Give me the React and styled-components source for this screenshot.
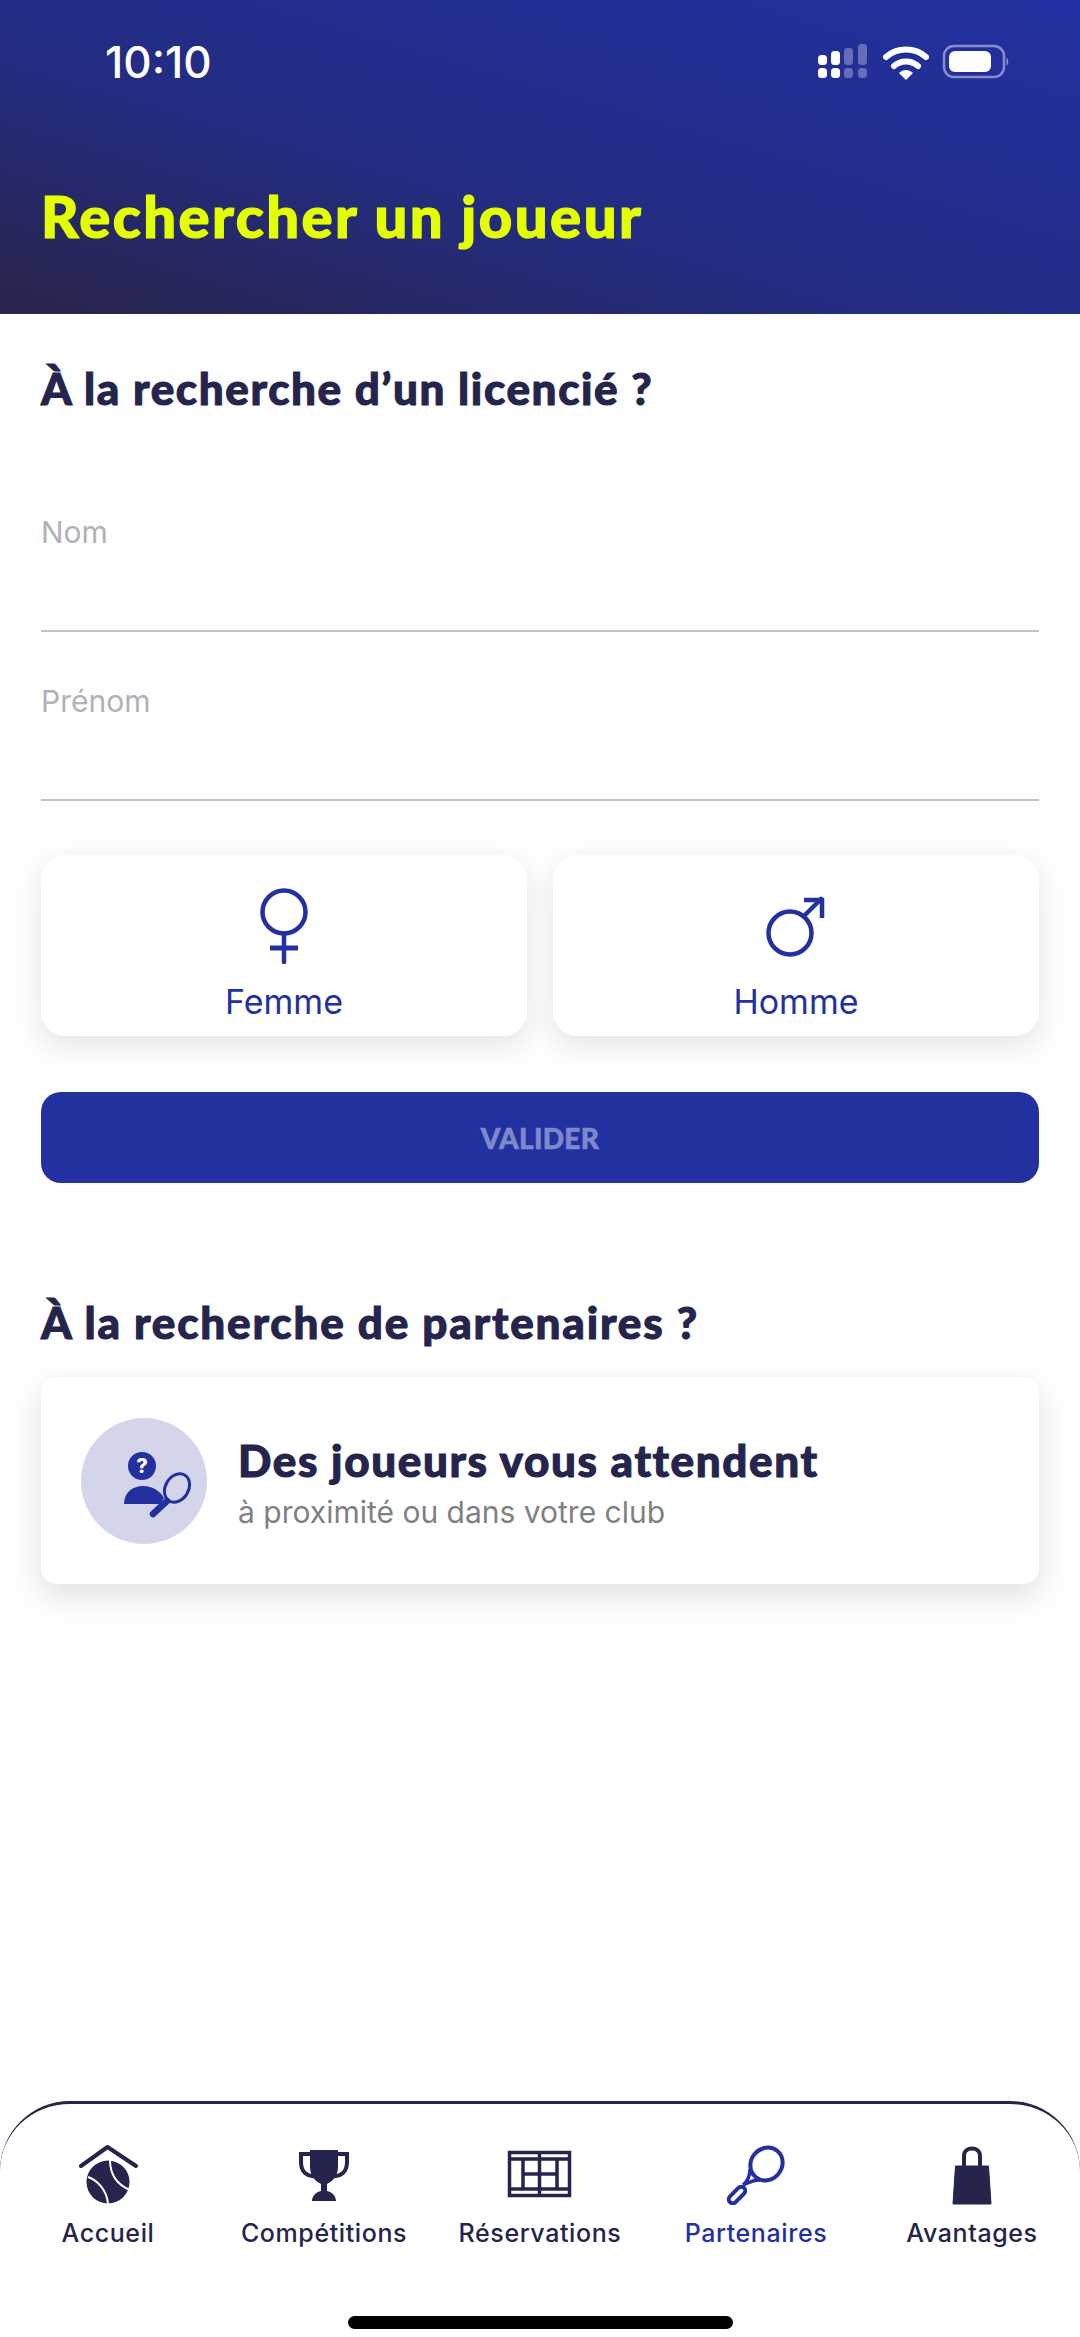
import React from "react";
import styled, { createGlobalStyle } from "styled-components";

const NAVY = "#24244c";
const BLUE = "#2330a0";

const tabs = [
  { label: "Accueil", icon: <HomeIcon /> },
  { label: "Compétitions", icon: <TrophyIcon /> },
  { label: "Réservations", icon: <CourtIcon /> },
  { label: "Partenaires", icon: <RacketIcon />, active: true },
  { label: "Avantages", icon: <BagIcon /> }
];

export default function App() {
  return (
    <Page>
      <GlobalStyle />
      <Header>
        <StatusBar>
          <Clock>10:10</Clock>
          <StatusIcons />
        </StatusBar>
        <PageTitle>Rechercher un joueur</PageTitle>
      </Header>

      <Main>
        <SectionTitle>À la recherche d’un licencié ?</SectionTitle>
        <Form>
          <Field>
            <FieldLabel>Nom</FieldLabel>
          </Field>
          <Field>
            <FieldLabel>Prénom</FieldLabel>
          </Field>
        </Form>

        <GenderRow>
          <GenderCard>
            <GenderIconSlot>
              <FemaleIcon />
            </GenderIconSlot>
            Femme
          </GenderCard>
          <GenderCard>
            <GenderIconSlot>
              <MaleIcon />
            </GenderIconSlot>
            Homme
          </GenderCard>
        </GenderRow>

        <SubmitButton>VALIDER</SubmitButton>

        <PartnersTitle>À la recherche de partenaires ?</PartnersTitle>
        <PartnerCard>
          <PartnerBadge>
            <PartnerIcon />
          </PartnerBadge>
          <PartnerText>
            <PartnerName>Des joueurs vous attendent</PartnerName>
            <PartnerHint>à proximité ou dans votre club</PartnerHint>
          </PartnerText>
        </PartnerCard>
      </Main>

      <TabBar>
        <Tabs>
          {tabs.map(tab => (
            <Tab key={tab.label} active={tab.active}>
              {tab.icon}
              <span>{tab.label}</span>
            </Tab>
          ))}
        </Tabs>
        <HomeIndicator />
      </TabBar>
    </Page>
  );
}

function StatusIcons() {
  return (
    <svg width="194" height="36" viewBox="0 0 194 36">
      <g fill="#fff">
        <rect x="1" y="24" width="9" height="10" rx="3.5" />
        <rect x="14" y="24" width="9" height="10" rx="3.5" />
        <rect x="1" y="11" width="9" height="10" rx="3.5" />
        <rect x="14" y="7" width="9" height="14" rx="3.5" />
      </g>
      <g fill="#fff" opacity="0.3">
        <rect x="27" y="24" width="9" height="10" rx="3.5" />
        <rect x="41" y="24" width="9" height="10" rx="3.5" />
        <rect x="27" y="4" width="9" height="17" rx="3.5" />
        <rect x="41" y="0" width="9" height="21" rx="3.5" />
      </g>
      <g fill="none" stroke="#fff" strokeWidth="6" strokeLinecap="round">
        <path d="M69 13 C 80 3, 98 3, 109 13" />
        <path d="M77 22 C 84 16, 94 16, 101 22" />
      </g>
      <path d="M82 29 C 86 25, 92 25, 96 29 L 89 36 Z" fill="#fff" />
      <rect x="127" y="2" width="60" height="31" rx="10" fill="none" stroke="#fff" strokeOpacity="0.45" strokeWidth="2.5" />
      <rect x="132" y="7" width="42" height="21" rx="6" fill="#fff" />
      <path d="M189.5 13 Q 193 17.5 189.5 22 Z" fill="#fff" fillOpacity="0.5" />
    </svg>
  );
}

function FemaleIcon() {
  return (
    <svg width="50" height="76" viewBox="0 0 50 76">
      <g fill="none" stroke={BLUE} strokeWidth="4.5" strokeLinecap="round">
        <circle cx="25" cy="24" r="21.5" />
        <path d="M25 46 V 74" />
        <path d="M11 60 H 39" strokeWidth="5" strokeLinecap="butt" />
      </g>
    </svg>
  );
}

function MaleIcon() {
  return (
    <svg width="60" height="62" viewBox="0 0 60 62" style={{ marginTop: 8 }}>
      <g fill="none" stroke={BLUE} strokeWidth="4.5" strokeLinecap="round">
        <circle cx="24" cy="37" r="21.5" />
        <path d="M38 20 L 55 3" />
        <path d="M38 4 H 56 V 22" strokeLinecap="butt" />
      </g>
    </svg>
  );
}

function PartnerIcon() {
  return (
    <svg width="126" height="126" viewBox="0 0 126 126">
      <circle cx="61" cy="48" r="14" fill={BLUE} />
      <text x="61" y="55" fontFamily="Inter, sans-serif" fontWeight="800" fontSize="20" fill="#fff" textAnchor="middle">?</text>
      <path d="M43 86 C 43 74, 52 68, 62 68 C 72 68, 79 73, 83 80 L 79 86 Z" fill={BLUE} />
      <ellipse cx="96" cy="70" rx="11.5" ry="15" transform="rotate(32 96 70)" fill="none" stroke={BLUE} strokeWidth="3" />
      <path d="M86 83 L 72 96" stroke={BLUE} strokeWidth="6.5" strokeLinecap="round" />
    </svg>
  );
}

function HomeIcon() {
  return (
    <svg width="70" height="60" viewBox="0 0 70 60">
      <path d="M8 21 L 34.5 2 L 63 21" fill="none" stroke={NAVY} strokeWidth="4" strokeLinecap="round" strokeLinejoin="round" />
      <circle cx="35" cy="37" r="21.5" fill={NAVY} />
      <g fill="none" stroke="#fff" strokeWidth="2">
        <path d="M37 15 C 37 30, 45 40, 57 45" />
        <path d="M15 32 C 24 35, 34 45, 35 59" />
      </g>
    </svg>
  );
}

function TrophyIcon() {
  return (
    <svg width="70" height="60" viewBox="0 0 70 60">
      <path d="M22 9 H 12 V 17 C 12 27, 18 32, 27 31 M48 9 H 58 V 17 C 58 27, 52 32, 43 31" fill="none" stroke={NAVY} strokeWidth="4" />
      <path d="M21 5 H 49 L 49 22 C 49 32, 42 37, 38 39 V 46 C 43 47, 47 51, 47 56 H 23 C 23 51, 27 47, 32 46 V 39 C 28 37, 21 32, 21 22 Z" fill={NAVY} />
    </svg>
  );
}

function CourtIcon() {
  return (
    <svg width="70" height="60" viewBox="0 0 70 60">
      <g fill="none" stroke={NAVY} strokeWidth="3.5">
        <rect x="4.5" y="7.5" width="60" height="43" />
        <path d="M4 14 H 65 M4 44 H 65 M18 14 V 44 M52 14 V 44 M34.5 7 V 51 M18 29 H 52" />
      </g>
    </svg>
  );
}

function RacketIcon() {
  return (
    <svg width="70" height="60" viewBox="0 0 70 60">
      <g fill="none" stroke={BLUE} strokeWidth="4">
        <ellipse cx="45.5" cy="19" rx="15.5" ry="17" transform="rotate(40 45.5 19)" />
        <path d="M29 24 C 29 31, 27 36, 22 40 M39 35 C 33 35, 28 37, 22 40" strokeWidth="3.5" />
        <rect x="6" y="46" width="20" height="8" rx="4" transform="rotate(-45 16 50)" />
      </g>
    </svg>
  );
}

function BagIcon() {
  return (
    <svg width="70" height="60" viewBox="0 0 70 60">
      <path d="M27 22 V 11 C 27 1, 43 1, 43 11 V 22" fill="none" stroke={NAVY} strokeWidth="4" />
      <path d="M18.5 21 H 51.5 L 54 59 H 16 Z" fill={NAVY} stroke={NAVY} strokeWidth="1" strokeLinejoin="round" />
    </svg>
  );
}

const GlobalStyle = createGlobalStyle`
  html, body {
    margin: 0;
    padding: 0;
    background: #fefefe;
  }
`;

const Page = styled.div`
  display: flex;
  flex-direction: column;
  height: 2337px;
  overflow: hidden;
  background: #fefefe;
  font-family: Inter, sans-serif;
`;

const Header = styled.header`
  height: 314px;
  box-sizing: border-box;
  padding: 40px 41px 0;
  background: linear-gradient(to top right, #29244a 0%, #232c80 40%, #2230a2 100%);
`;

const StatusBar = styled.div`
  display: flex;
  justify-content: space-between;
  align-items: center;
  height: 44px;
  margin-right: 28px;
`;

const Clock = styled.span`
  margin-left: 64px;
  color: #fff;
  font-size: 44px;
  font-weight: 500;
`;

const PageTitle = styled.h1`
  margin: 97px 0 0;
  color: #e4ff00;
  font-family: Lato, sans-serif;
  font-size: 58px;
  line-height: 70px;
  font-weight: 900;
  letter-spacing: 2.45px;
  -webkit-text-stroke: 1.2px #e4ff00;
`;

const Main = styled.main`
  flex: 1;
  padding: 0 41px;
`;

const SectionTitle = styled.h2`
  margin: 49px 0 0;
  color: ${NAVY};
  font-family: Lato, sans-serif;
  font-size: 44px;
  line-height: 50px;
  font-weight: 900;
  letter-spacing: 1.6px;
  -webkit-text-stroke: 1px ${NAVY};
`;

const Form = styled.div`
  margin-top: 50px;
`;

const Field = styled.div`
  height: 169px;
  box-sizing: border-box;
  border-bottom: 2px solid #c4c4c6;
  padding-top: 51px;
`;

const FieldLabel = styled.div`
  color: #b1b1b7;
  font-size: 30px;
  line-height: 36px;
`;

const GenderRow = styled.div`
  display: flex;
  gap: 26px;
  margin-top: 54px;
`;

const GenderCard = styled.button`
  display: flex;
  flex-direction: column;
  align-items: center;
  flex: 1;
  height: 181px;
  box-sizing: border-box;
  padding: 33px 0 0;
  border: 0;
  border-radius: 24px;
  background: #fff;
  box-shadow: 0 10px 28px rgba(30, 30, 50, 0.11);
  color: ${BLUE};
  font-family: Inter, sans-serif;
  font-size: 34px;
  line-height: 40px;
`;

const GenderIconSlot = styled.div`
  display: flex;
  justify-content: center;
  align-items: flex-start;
  height: 74px;
  margin-bottom: 20px;
`;

const SubmitButton = styled.button`
  display: block;
  width: 100%;
  height: 91px;
  margin-top: 56px;
  border: 0;
  border-radius: 20px;
  background: ${BLUE};
  color: #7f88cc;
  font-family: Lato, sans-serif;
  font-size: 28px;
  font-weight: 900;
  letter-spacing: 0.3px;
  -webkit-text-stroke: 0.6px #7f88cc;
`;

const PartnersTitle = styled(SectionTitle)`
  margin-top: 114px;
  letter-spacing: 1.8px;
`;

const PartnerCard = styled.div`
  display: flex;
  align-items: center;
  gap: 31px;
  height: 207px;
  margin-top: 30px;
  padding-left: 40px;
  border-radius: 16px;
  background: #fff;
  box-shadow: 0 12px 30px rgba(30, 30, 50, 0.13);
`;

const PartnerBadge = styled.div`
  width: 126px;
  height: 126px;
  border-radius: 50%;
  background: #d4d5eb;
`;

const PartnerText = styled.div`
  padding-top: 4px;
`;

const PartnerName = styled.div`
  color: ${NAVY};
  font-family: Lato, sans-serif;
  font-size: 44px;
  line-height: 50px;
  font-weight: 900;
  letter-spacing: 1.6px;
  -webkit-text-stroke: 1px ${NAVY};
`;

const PartnerHint = styled.div`
  margin-top: 9px;
  color: #808084;
  font-size: 30px;
  line-height: 36px;
`;

const TabBar = styled.nav`
  height: 236px;
  box-sizing: border-box;
  border-top: 3px solid ${NAVY};
  border-radius: 70px 70px 0 0;
  background: #fff;
`;

const Tabs = styled.div`
  display: grid;
  grid-template-columns: repeat(5, 1fr);
  padding-top: 41px;
`;

const Tab = styled.div`
  display: flex;
  flex-direction: column;
  align-items: center;
  gap: 12px;
  color: ${props => (props.active ? BLUE : NAVY)};
  font-size: 25px;
  line-height: 32px;
  font-weight: 450;
  letter-spacing: 0.6px;
  white-space: nowrap;
`;

const HomeIndicator = styled.div`
  width: 385px;
  height: 13px;
  margin: 67px auto 0;
  border-radius: 7px;
  background: #000;
`;
